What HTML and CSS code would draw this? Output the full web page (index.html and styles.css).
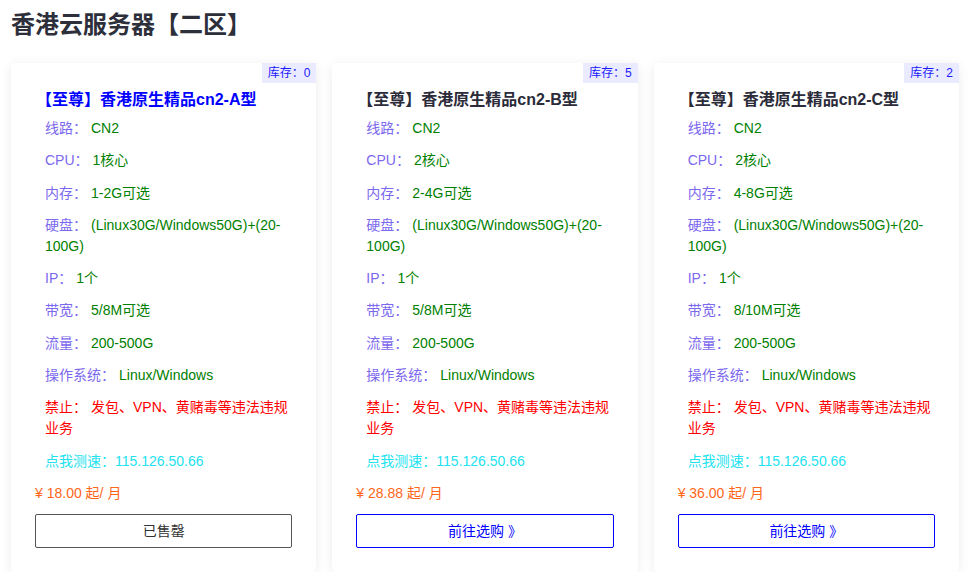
FILE: index.html
```html
<!DOCTYPE html>
<html lang="zh-CN">
<head>
  <meta charset="UTF-8">
  <meta name="viewport" content="width=device-width, initial-scale=1.0">
  <title>香港云服务器【二区】</title>
  <link rel="stylesheet" href="styles.css">
</head>
<body>

<div class="zone">
  <h1 class="zone-title">香港云服务器【二区】</h1>

  <div class="plans">
    <!-- A型 -->
    <div class="plan">
      <span class="stock">库存：0</span>
      <h3 class="plan-name plan-name-hot">【至尊】香港原生精品cn2-A型</h3>
      <ul class="specs">
        <li><span class="label">线路：</span><span class="value">CN2</span></li>
        <li><span class="label">CPU：</span><span class="value">1核心</span></li>
        <li><span class="label">内存：</span><span class="value">1-2G可选</span></li>
        <li><span class="label">硬盘：</span><span class="value">(Linux30G/Windows50G)+(20-100G)</span></li>
        <li><span class="label">IP：</span><span class="value">1个</span></li>
        <li><span class="label">带宽：</span><span class="value">5/8M可选</span></li>
        <li><span class="label">流量：</span><span class="value">200-500G</span></li>
        <li><span class="label">操作系统：</span><span class="value">Linux/Windows</span></li>
        <li class="warn">禁止：<span class="value">发包、VPN、黄赌毒等违法违规业务</span></li>
        <li class="speed">点我测速：115.126.50.66</li>
      </ul>
      <p class="price">¥ 18.00 起/ 月</p>
      <a href="#" class="buy-btn sold-out">已售罄</a>
    </div>

    <!-- B型 -->
    <div class="plan">
      <span class="stock">库存：5</span>
      <h3 class="plan-name">【至尊】香港原生精品cn2-B型</h3>
      <ul class="specs">
        <li><span class="label">线路：</span><span class="value">CN2</span></li>
        <li><span class="label">CPU：</span><span class="value">2核心</span></li>
        <li><span class="label">内存：</span><span class="value">2-4G可选</span></li>
        <li><span class="label">硬盘：</span><span class="value">(Linux30G/Windows50G)+(20-100G)</span></li>
        <li><span class="label">IP：</span><span class="value">1个</span></li>
        <li><span class="label">带宽：</span><span class="value">5/8M可选</span></li>
        <li><span class="label">流量：</span><span class="value">200-500G</span></li>
        <li><span class="label">操作系统：</span><span class="value">Linux/Windows</span></li>
        <li class="warn">禁止：<span class="value">发包、VPN、黄赌毒等违法违规业务</span></li>
        <li class="speed">点我测速：115.126.50.66</li>
      </ul>
      <p class="price">¥ 28.88 起/ 月</p>
      <a href="#" class="buy-btn">前往选购 》</a>
    </div>

    <!-- C型 -->
    <div class="plan">
      <span class="stock">库存：2</span>
      <h3 class="plan-name">【至尊】香港原生精品cn2-C型</h3>
      <ul class="specs">
        <li><span class="label">线路：</span><span class="value">CN2</span></li>
        <li><span class="label">CPU：</span><span class="value">2核心</span></li>
        <li><span class="label">内存：</span><span class="value">4-8G可选</span></li>
        <li><span class="label">硬盘：</span><span class="value">(Linux30G/Windows50G)+(20-100G)</span></li>
        <li><span class="label">IP：</span><span class="value">1个</span></li>
        <li><span class="label">带宽：</span><span class="value">8/10M可选</span></li>
        <li><span class="label">流量：</span><span class="value">200-500G</span></li>
        <li><span class="label">操作系统：</span><span class="value">Linux/Windows</span></li>
        <li class="warn">禁止：<span class="value">发包、VPN、黄赌毒等违法违规业务</span></li>
        <li class="speed">点我测速：115.126.50.66</li>
      </ul>
      <p class="price">¥ 36.00 起/ 月</p>
      <a href="#" class="buy-btn">前往选购 》</a>
    </div>
  </div>
</div>

</body>
</html>
```

FILE: styles.css
```css
body {
  font-family: "Liberation Sans", "Noto Sans CJK SC", sans-serif;
  background-color: #ffffff;
  margin: 0;
  padding: 0;
}

.zone {
  padding: 0 10px 0 11px;
}

.zone-title {
  font-size: 24px;
  line-height: 32px;
  font-weight: bold;
  color: #2d2f3b;
  margin: 9px 0 22px;
}

.plans {
  display: grid;
  grid-template-columns: repeat(3, 1fr);
  gap: 16px;
}

.plan {
  position: relative;
  background-color: #ffffff;
  border-radius: 4px;
  box-shadow: 0 2px 12px rgba(0, 0, 0, 0.08);
  padding: 26px 24px 24px;
}

/* stock tag in the top right corner */
.stock {
  position: absolute;
  top: 0;
  right: 0;
  height: 20px;
  line-height: 20px;
  padding: 0 6px;
  font-size: 12px;
  color: #1a1aff;
  background-color: #ebebff;
}

.plan-name {
  font-size: 16px;
  line-height: 22px;
  font-weight: bold;
  color: #2b2b3a;
  margin: 0 0 7px 1px;
}

.plan-name-hot {
  color: #0000ff;
}

.specs {
  list-style: none;
  margin: 0;
  padding: 0 0 0 10px;
}

.specs li {
  font-size: 14px;
  line-height: 21px;
  margin-bottom: 11.3px;
  color: #7b68ee;
}

.specs .value {
  margin-left: 4px;
  color: #008000;
}

.specs .warn,
.specs .warn .value {
  color: #ff0000;
}

.specs .speed {
  color: #22e2f0;
}

.price {
  font-size: 14px;
  line-height: 21px;
  color: #ff6619;
  margin: 0 0 10px;
}

.buy-btn {
  display: block;
  height: 32px;
  line-height: 32px;
  text-align: center;
  font-size: 14px;
  color: #0000ff;
  border: 1px solid #0000ff;
  border-radius: 2px;
  text-decoration: none;
}

.sold-out {
  color: #333333;
  border-color: #555555;
}
```
